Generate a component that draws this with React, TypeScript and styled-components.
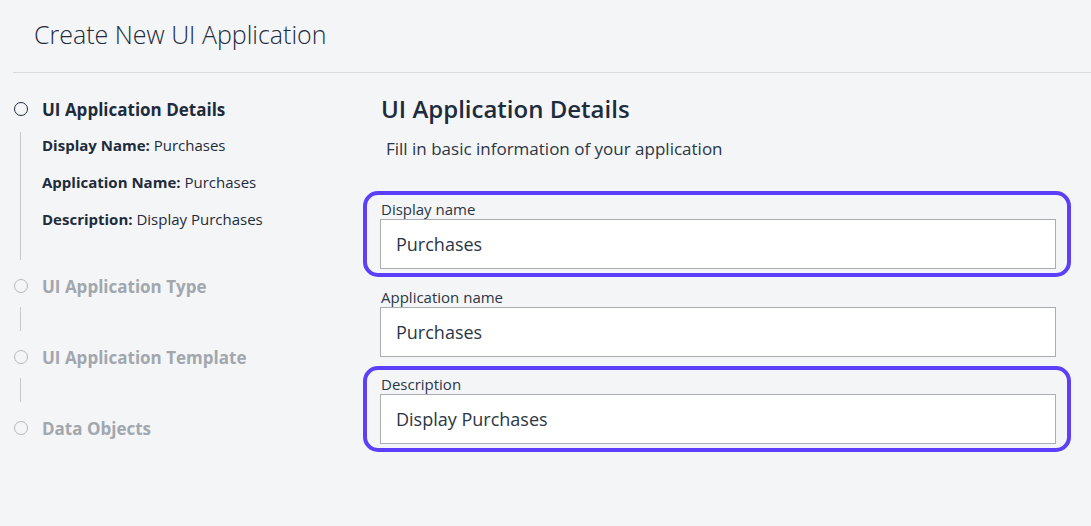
import React from "react";
import styled, { createGlobalStyle } from "styled-components";

const Global = createGlobalStyle`
  html, body { margin: 0; padding: 0; background: #f4f5f7; }
  body { font-family: "Open Sans", "Noto Sans", sans-serif; color: #1d2b3c; }
  * { box-sizing: border-box; }
`;

const Page = styled.div`
  width: 1091px;
  height: 526px;
  background: #f4f5f7;
  overflow: hidden;
`;

const Header = styled.header`
  height: 72px;
  padding-left: 34px;
  display: flex;
  align-items: center;
  padding-bottom: 5px;
`;

const PageTitle = styled.h1`
  margin: 0;
  font-size: 25px;
  font-weight: 300;
  color: #1d2b3c;
`;

const Divider = styled.hr`
  margin: 0 0 0 13px;
  border: 0;
  border-top: 1px solid #d8dadd;
`;

const Body = styled.div`
  display: flex;
  padding-left: 14px;
`;

const Stepper = styled.nav`
  width: 349px;
  flex: none;
  padding-top: 25px;
`;

const Step = styled.div`
  display: flex;
  align-items: center;
  gap: 14px;
  height: 22px;
`;

const Circle = styled.span<{ $active?: boolean }>`
  width: 14px;
  height: 14px;
  border-radius: 50%;
  border: 1.5px solid ${(p) => (p.$active ? "#1d2b3c" : "#b4b8bd")};
  flex: none;
`;

const StepLabel = styled.span<{ $active?: boolean }>`
  font-size: 17px;
  font-weight: 700;
  color: ${(p) => (p.$active ? "#1d2b3c" : "#a2a7ad")};
`;

const Connector = styled.div<{ $long?: boolean }>`
  margin-left: 6px;
  border-left: 1px solid #c5c8cc;
  height: ${(p) => (p.$long ? 128 : 24)}px;
  margin-top: ${(p) => (p.$long ? 12 : 10)}px;
  margin-bottom: 15px;
  padding-left: 21px;
  padding-top: ${(p) => (p.$long ? 3 : 0)}px;
  display: flex;
  flex-direction: column;
  gap: 17px;
`;

const Summary = styled.div`
  font-size: 15px;
  line-height: 20px;
  white-space: nowrap;
  color: #1d2b3c;
  b { font-weight: 700; }
`;

const Main = styled.main`
  flex: 1;
  padding-right: 20px;
  padding-top: 21px;
`;

const Title = styled.h2`
  margin: 0 0 0 18px;
  font-size: 24px;
  font-weight: 600;
  line-height: 30px;
  color: #1d2b3c;
`;

const Subtitle = styled.p`
  margin: 15px 0 0 23px;
  font-size: 17px;
  line-height: 20px;
  color: #2b3645;
`;

const Form = styled.div`
  margin-top: 40px;
  padding-left: 17px;
  padding-right: 15px;
  display: flex;
  flex-direction: column;
  gap: 17.5px;
`;

const Field = styled.label<{ $highlight?: boolean }>`
  position: relative;
  display: flex;
  flex-direction: column;

  &::before {
    content: "";
    display: ${(p) => (p.$highlight ? "block" : "none")};
    position: absolute;
    top: -8px;
    bottom: -8px;
    left: -17px;
    right: -15px;
    border: 4px solid #5b3ffa;
    border-radius: 15px;
    pointer-events: none;
  }
`;

const FieldLabel = styled.span`
  font-size: 15px;
  line-height: 20px;
  padding-left: 1px;
  color: #2b3645;
`;

const Input = styled.input`
  height: 50px;
  border: 1px solid #a9aeb5;
  background: #fff;
  padding: 0 15px;
  font-family: inherit;
  font-size: 18px;
  color: #2b3645;
  outline: none;
`;

const fields = [
  { label: "Display name", value: "Purchases", highlight: true },
  { label: "Application name", value: "Purchases", highlight: false },
  { label: "Description", value: "Display Purchases", highlight: true },
];

export default function App() {
  return (
    <Page>
      <Global />
      <Header>
        <PageTitle>Create New UI Application</PageTitle>
      </Header>
      <Divider />
      <Body>
        <Stepper>
          <Step>
            <Circle $active />
            <StepLabel $active>UI Application Details</StepLabel>
          </Step>
          <Connector $long>
            <Summary>
              <b>Display Name:</b> Purchases
            </Summary>
            <Summary>
              <b>Application Name:</b> Purchases
            </Summary>
            <Summary>
              <b>Description:</b> Display Purchases
            </Summary>
          </Connector>
          <Step>
            <Circle />
            <StepLabel>UI Application Type</StepLabel>
          </Step>
          <Connector />
          <Step>
            <Circle />
            <StepLabel>UI Application Template</StepLabel>
          </Step>
          <Connector />
          <Step>
            <Circle />
            <StepLabel>Data Objects</StepLabel>
          </Step>
        </Stepper>
        <Main>
          <Title>UI Application Details</Title>
          <Subtitle>Fill in basic information of your application</Subtitle>
          <Form>
            {fields.map((f) => (
              <Field key={f.label} $highlight={f.highlight}>
                <FieldLabel>{f.label}</FieldLabel>
                <Input readOnly value={f.value} />
              </Field>
            ))}
          </Form>
        </Main>
      </Body>
    </Page>
  );
}
